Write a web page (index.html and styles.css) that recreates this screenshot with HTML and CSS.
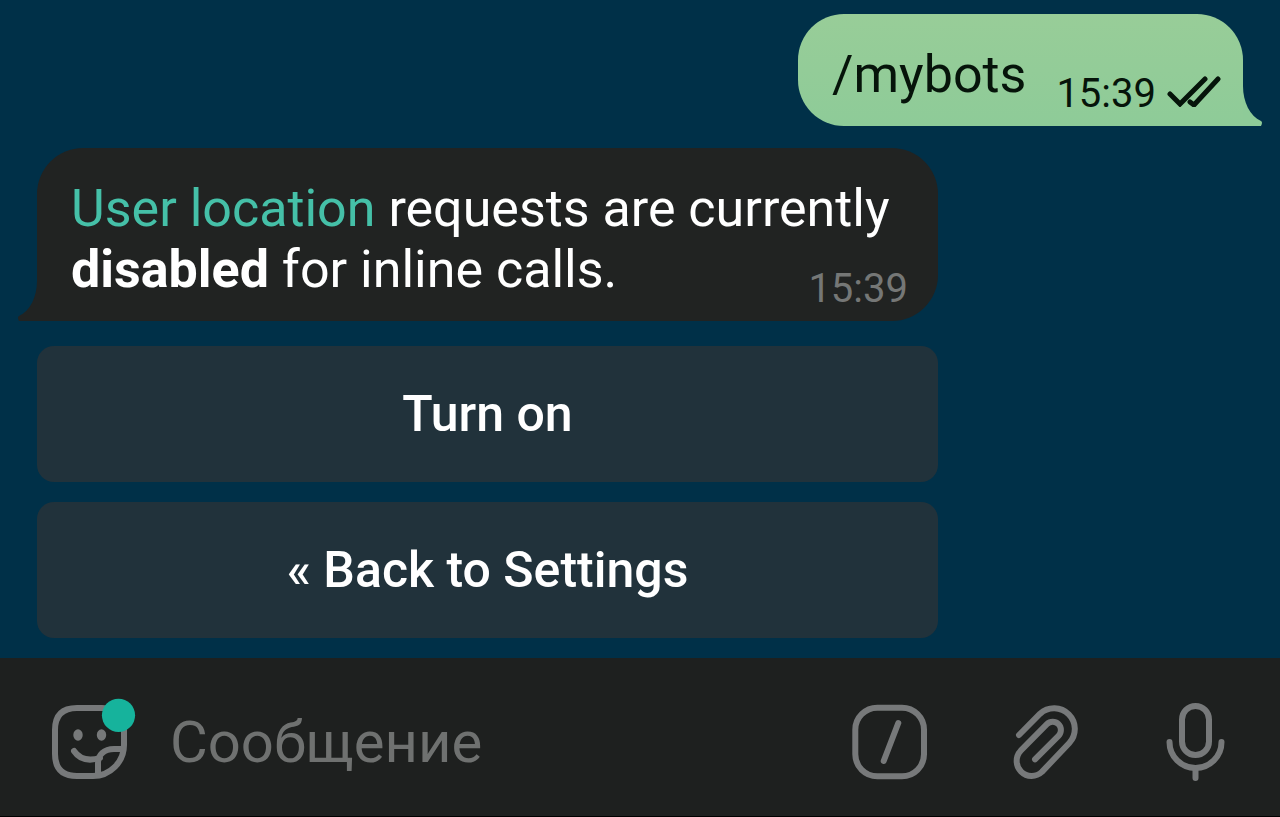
FILE: index.html
```html
<!DOCTYPE html>
<html lang="ru">
<head>
    <meta charset="UTF-8" />
    <meta name="viewport" content="width=device-width, initial-scale=1" />
    <title>BotFather</title>
    <link rel="stylesheet" href="styles.css">
</head>
<body>

<main class="chat">
    <article class="bubble out">
        <p>/mybots</p>
        <div class="meta">
            <time>15:39</time>
            <svg class="checks" viewBox="0 0 56 32" aria-hidden="true">
                <path d="M4 19 L14 29 L39 4 M24 27 L28 30 L52 4" />
            </svg>
        </div>
        <svg class="tail" viewBox="0 0 20 40" aria-hidden="true">
            <path d="M0 0 C0 16 7 30 18 35 Q20 36 18 40 L0 40 Z" />
        </svg>
    </article>

    <section class="reply">
        <article class="bubble in">
            <p><a href="#">User location</a> requests are currently <b>disabled</b> for inline calls.</p>
            <time>15:39</time>
            <svg class="tail" viewBox="0 0 20 40" aria-hidden="true">
                <path d="M20 0 C20 16 13 30 2 35 Q0 36 2 40 L20 40 Z" />
            </svg>
        </article>

        <div class="keyboard">
            <button type="button">Turn on</button>
            <button type="button">« Back to Settings</button>
        </div>
    </section>
</main>

<form class="composer">
    <button type="button" class="icon" aria-label="Стикеры">
        <svg viewBox="0 0 80 80">
            <path d="M27 6 H52 Q74 6 74 28 V43 C74 60 60 74 43 74 H27 Q5 74 5 52 V28 Q5 6 27 6 Z" />
            <path d="M73 47 H64 C54 47 48 53 48 61 V73" />
            <path d="M24 49 C30 58 40 59 50 56" />
            <ellipse class="fill" cx="28" cy="33" rx="4.7" ry="5.7" />
            <ellipse class="fill" cx="51.5" cy="33" rx="4.7" ry="5.7" />
            <circle class="dot" cx="68.5" cy="13.3" r="16.6" />
        </svg>
    </button>

    <input type="text" id="message" name="message" placeholder="Сообщение" aria-label="Сообщение" />

    <div class="actions">
        <button type="button" class="icon" aria-label="Команды">
            <svg viewBox="0 0 80 80">
                <rect x="5.3" y="5.7" width="68.7" height="68.6" rx="22" />
                <path d="M48.3 21 L33.7 59" />
            </svg>
        </button>
        <button type="button" class="icon" aria-label="Прикрепить">
            <svg viewBox="0 0 80 80">
                <path d="M16 33 L37.1 11.7 A20.7 20.7 0 0 1 66.3 41 L38.9 69.9 A15 15 0 0 1 17.7 48.7 L43.9 22.2 A8.2 8.2 0 0 1 55.5 33.8 L32 57.3" />
            </svg>
        </button>
        <button type="button" class="icon" aria-label="Голосовое сообщение">
            <svg viewBox="0 0 80 80">
                <rect x="26" y="4" width="27" height="49" rx="13.5" />
                <path d="M13.5 40 A26 26 0 0 0 65.5 40 M39.5 66 V76" />
            </svg>
        </button>
    </div>
</form>

</body>
</html>
```
FILE: styles.css
```css
* {
    box-sizing: border-box;
}

body {
    font-family: Roboto, "Noto Sans", sans-serif;
    background: #003048;
    margin: 0;
    min-height: 100vh;
    display: flex;
    flex-direction: column;
    color: #fff;
}

button {
    border: none;
    font-family: inherit;
    color: inherit;
    cursor: pointer;
}

.chat {
    flex: 1;
    display: flex;
    flex-direction: column;
    gap: 22px;
    padding: 14px 37px 20px;
}

.bubble {
    position: relative;
    display: flex;
    align-items: flex-end;
    justify-content: space-between;
    padding: 30px 30px 12px 34px;
    border-radius: 46px;
}

.bubble p {
    margin: 0;
    padding-bottom: 9px;
    font-size: 52px;
    line-height: 61px;
}

.bubble time {
    font-size: 40px;
    line-height: 40px;
}

.bubble a {
    color: #45c0a8;
    text-decoration: none;
}

.bubble b {
    font-weight: 700;
}

.out {
    align-self: flex-end;
    gap: 30px;
    padding-right: 21px;
    border-bottom-right-radius: 0;
    background: linear-gradient(#98cd98, #8ecb98);
    color: #06140a;
}

.meta {
    display: flex;
    align-items: flex-end;
    gap: 10px;
}

.checks {
    width: 56px;
    height: 32px;
    margin-bottom: 7px;
    fill: none;
    stroke: #06140a;
    stroke-width: 5;
    stroke-linecap: round;
}

.tail {
    position: absolute;
    bottom: 0;
    width: 20px;
    height: 40px;
}

.out .tail {
    left: 100%;
    fill: #8ecb98;
}

.in {
    border-bottom-left-radius: 0;
    background: #212322;
}

/* the time sits beside the short last line, so the text may run over its column */
.in p {
    flex: 1;
    margin-right: -90px;
}

.in time {
    color: #757776;
}

.in .tail {
    right: 100%;
    fill: #212322;
}

.reply {
    width: 100%;
    max-width: 901px;
}

.keyboard {
    display: grid;
    gap: 20px;
    margin-top: 25px;
}

.keyboard button {
    height: 136px;
    border-radius: 17px;
    background: #21323b;
    font-size: 50px;
    font-weight: 500;
}

.composer {
    display: flex;
    align-items: center;
    gap: 40px;
    padding: 44px 44px 34px 50px;
    background: #1e201f;
    border-bottom: 1px solid #000;
}

.composer input {
    flex: 1;
    min-width: 0;
    height: 80px;
    padding: 0;
    border: none;
    outline: none;
    background: none;
    font-family: inherit;
    font-size: 58px;
    color: #fff;
}

.composer input::placeholder {
    color: #6f7170;
    opacity: 1;
}

.actions {
    display: flex;
    gap: 73px;
}

.icon {
    width: 80px;
    height: 80px;
    padding: 0;
    background: none;
}

.icon svg {
    display: block;
    width: 80px;
    height: 80px;
    overflow: visible;
    fill: none;
    stroke: #77797a;
    stroke-width: 6;
    stroke-linecap: round;
    stroke-linejoin: round;
}

.icon .fill {
    fill: #77797a;
    stroke: none;
}

.icon .dot {
    fill: #16b39c;
    stroke: none;
}
```
